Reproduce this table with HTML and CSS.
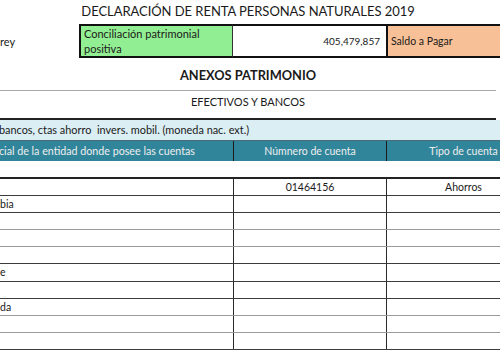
FILE: index.html
```html
<!DOCTYPE html>
<html lang="es">
<head>
<meta charset="utf-8">
<link rel="stylesheet" href="styles.css">
</head>
<body>
<div class="sheet">
  <div class="title">DECLARACIÓN DE RENTA PERSONAS NATURALES 2019</div>
  <div class="top">
    <div class="c-name">rey</div>
    <div class="c-green">Conciliación patrimonial<br>positiva</div>
    <div class="c-value">405,479,857</div>
    <div class="c-orange">Saldo a Pagar</div>
  </div>
  <div class="anexos">ANEXOS PATRIMONIO</div>
  <div class="efectivos">EFECTIVOS Y BANCOS</div>
  <div class="section">bancos, ctas ahorro &nbsp;invers. mobil. (moneda nac. ext.)</div>
  <div class="head">
    <div class="h1">cial de la entidad donde posee las cuentas</div>
    <div class="h2">Númnero de cuenta</div>
    <div class="h3">Tipo de cuenta</div>
  </div>
  <div class="spacer"></div>
  <div class="rows">
    <div class="row first"><div class="d1"></div><div class="d2">01464156</div><div class="d3">Ahorros</div></div>
    <div class="row"><div class="d1">bia</div><div class="d2"></div><div class="d3"></div></div>
    <div class="row gray"><div class="d1"></div><div class="d2"></div><div class="d3"></div></div>
    <div class="row gray"><div class="d1"></div><div class="d2"></div><div class="d3"></div></div>
    <div class="row"><div class="d1"></div><div class="d2"></div><div class="d3"></div></div>
    <div class="row"><div class="d1">e</div><div class="d2"></div><div class="d3"></div></div>
    <div class="row"><div class="d1"></div><div class="d2"></div><div class="d3"></div></div>
    <div class="row gray"><div class="d1">da</div><div class="d2"></div><div class="d3"></div></div>
    <div class="row gray"><div class="d1"></div><div class="d2"></div><div class="d3"></div></div>
    <div class="row"><div class="d1"></div><div class="d2"></div><div class="d3"></div></div>
  </div>
</div>
</body>
</html>
```
FILE: styles.css
```css
html, body {
  margin: 0;
  padding: 0;
  background: #ffffff;
  overflow: hidden;
}
.sheet {
  width: 500px;
  height: 350px;
  overflow: hidden;
  font-family: Lato, "Open Sans", sans-serif;
  color: #1a1a1a;
  font-size: 10.5px;
}
.title {
  height: 24px;
  line-height: 22px;
  font-size: 13px;
  text-align: center;
  width: 496px;
  letter-spacing: -0.05px;
}
.top {
  display: grid;
  grid-template-columns: 79px 154px 153px 154px;
  height: 32px;
}
.c-name {
  display: flex;
  align-items: center;
  font-size: 11px;
}
.c-green, .c-value, .c-orange {
  border-top: 2px solid #111;
  border-bottom: 2px solid #111;
  box-sizing: border-box;
}
.c-green {
  background: #92ee92;
  border-left: 2px solid #111;
  border-right: 1px solid #333;
  padding: 0 0 0 3px;
  font-size: 11px;
  line-height: 15px;
}
.c-value {
  padding-right: 6px;
  display: flex;
  align-items: center;
  justify-content: flex-end;
  font-size: 10px;
}
.c-orange {
  background: #f8c096;
  border-left: 2px solid #111;
  padding-left: 3px;
  display: flex;
  align-items: center;
  font-size: 10.5px;
}
.anexos {
  width: 496px;
  height: 35px;
  box-sizing: border-box;
  padding-top: 11px;
  line-height: 17px;
  text-align: center;
  font-weight: bold;
  font-size: 12.8px;
  border-bottom: 1px solid #a8a8a8;
}
.efectivos {
  width: 496px;
  height: 29px;
  box-sizing: border-box;
  padding-top: 2px;
  line-height: 17px;
  text-align: center;
  font-size: 11px;
  border-bottom: 2px solid #222;
}
.section {
  background: #daeef3;
  height: 20px;
  line-height: 20px;
  white-space: nowrap;
  font-size: 10.9px;
  margin-left: -1px;
}
.head {
  display: grid;
  grid-template-columns: 233px 153px 154px;
  background: #31859b;
  color: #eeeeee;
  height: 20px;
  line-height: 20px;
  border-top: 1px solid #4a6e78;
}
.h1 {
  white-space: nowrap;
  margin-left: -1px;
  font-size: 10.7px;
}
.h2, .h3 {
  border-left: 1px solid #1a1a1a;
  text-align: center;
}
.spacer {
  height: 16px;
}
.rows {
  border-top: 2px solid #222;
}
.row {
  display: grid;
  grid-template-columns: 233px 153px 154px;
  height: 17.1px;
  box-sizing: border-box;
  border-bottom: 1px solid #3c3c3c;
  line-height: 16px;
}
.row.gray {
  border-bottom: 1px solid #9a9a9a;
}
.d1 {
  white-space: nowrap;
}
.d2, .d3 {
  border-left: 1px solid #2a2a2a;
  text-align: center;
}
.first .d2, .first .d3 {
  line-height: 17px;
}
```
